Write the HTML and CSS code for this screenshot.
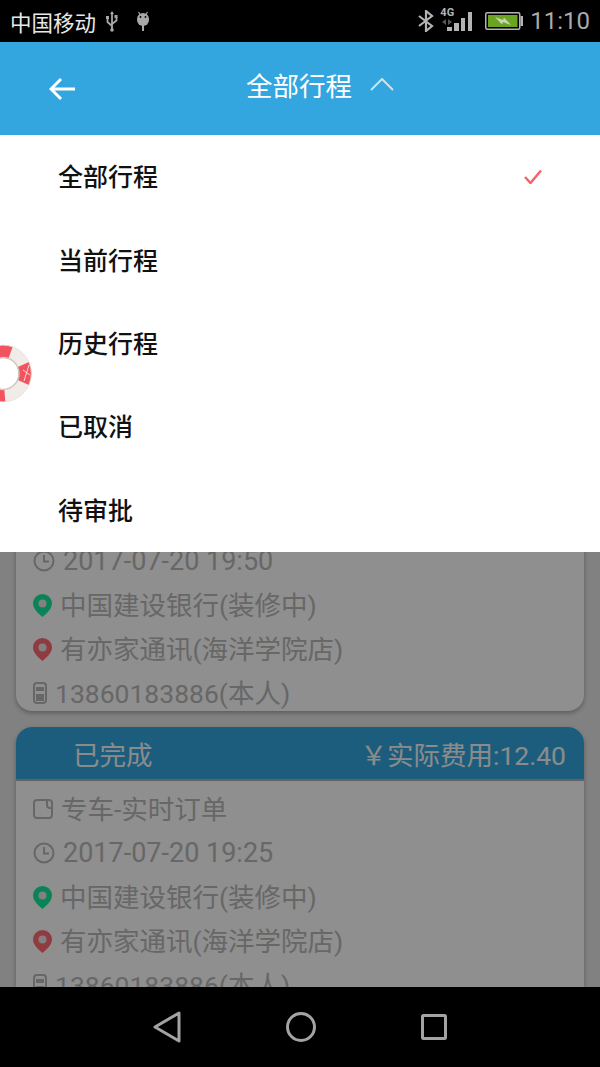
FILE: index.html
```html
<!DOCTYPE html>
<html lang="zh-CN">
<head>
  <meta charset="utf-8">
  <title>全部行程</title>
  <link rel="stylesheet" href="styles.css">
</head>
<body>
  <div class="phone">

    <div class="status-bar">
      <span class="carrier">中国移动</span>
      <svg class="ic-usb" viewBox="0 0 14 21"><path d="M7 1v19M7 15L2.500 11V7M7 13l4.500-3.500V6" fill="none" stroke="#a8a8a8" stroke-width="1.800"/><path d="M7 0l2 3H5zM1 5h3v3H1zM9.500 4h3v3h-3z" fill="#a8a8a8"/><circle cx="7" cy="19" r="1.800" fill="#a8a8a8"/></svg>
      <svg class="ic-debug" viewBox="0 0 14 20"><path d="M2.500 1l2 3M11.500 1l-2 3" stroke="#a8a8a8" stroke-width="1.200"/><path d="M1 8a6 6 0 0 1 12 0v1a6 6 0 0 1-12 0z" fill="#a8a8a8"/><path d="M7 14v6" stroke="#a8a8a8" stroke-width="2"/><circle cx="4.500" cy="6" r=".9" fill="#000"/><circle cx="9.500" cy="6" r=".9" fill="#000"/></svg>
      <span class="status-right">
        <svg class="ic-bt" viewBox="0 0 16 22"><path d="M1 6l13 10-6 5V1l6 5L1 16" fill="none" stroke="#b4b4b4" stroke-width="2.200"/></svg>
        <span class="net">
          <span class="net-label">4G</span>
          <svg class="ic-arrows" viewBox="0 0 10 6"><path d="M4 0v6L0 3zM6 0v6l4-3z" fill="#555"/></svg>
        </span>
        <svg class="ic-signal" viewBox="0 0 25 19"><path d="M0 15h5v4H0zM7 11h5v8H7zM14 6h4v13h-4zM21 0h4v19h-4z" fill="#b4b4b4"/></svg>
        <svg class="ic-battery" viewBox="0 0 38 18"><rect x=".75" y=".75" width="34" height="16.500" rx="1.500" fill="#000" stroke="#b4b4b4" stroke-width="1.500"/><rect x="3" y="3" width="29.500" height="12" fill="#6aa521"/><path d="M35.500 4h2.500v10h-2.500z" fill="#b4b4b4"/><path d="M10 5l8 3 1-2.500 7 7.500-8-3-1 2.500z" fill="#c8d8b0"/></svg>
        <span class="clock">11:10</span>
      </span>
    </div>

    <div class="top-bar">
      <svg class="ic-back" viewBox="0 0 27 24"><path d="M26 12H2M12 2L2 12l10 10" fill="none" stroke="#fff" stroke-width="3"/></svg>
      <span class="top-title">全部行程</span>
      <svg class="ic-chevron" viewBox="0 0 24 13"><path d="M1 12L12 1l11 11" fill="none" stroke="#cfe3ee" stroke-width="2"/></svg>
    </div>

    <div class="content">
      <div class="trip-list">
        <div class="trip-card">
          <div class="trip-body">
            <div class="trip-row">
              <svg class="ic-clock" viewBox="0 0 22 22"><circle cx="11" cy="11" r="9.500" fill="none" stroke="#b8b8b8" stroke-width="2"/><path d="M11 5v6.500h5" fill="none" stroke="#b8b8b8" stroke-width="2"/></svg>
              <span class="trip-time">2017-07-20 19:50</span>
            </div>
            <div class="trip-row">
              <svg class="ic-pin" viewBox="0 0 19 23"><path d="M9.500 0a9.500 9.500 0 0 1 9.500 9.500c0 5-5 10-9.500 13.500C5 19.500 0 14.500 0 9.500A9.500 9.500 0 0 1 9.500 0z" fill="#14e89c"/><circle cx="9.500" cy="9.500" r="4" fill="#e6e6e6"/></svg>
              <span class="trip-text">中国建设银行(装修中)</span>
            </div>
            <div class="trip-row">
              <svg class="ic-pin" viewBox="0 0 19 23"><path d="M9.500 0a9.500 9.500 0 0 1 9.500 9.500c0 5-5 10-9.500 13.500C5 19.500 0 14.500 0 9.500A9.500 9.500 0 0 1 9.500 0z" fill="#ff6a72"/><circle cx="9.500" cy="9.500" r="4" fill="#e6e6e6"/></svg>
              <span class="trip-text">有亦家通讯(海洋学院店)</span>
            </div>
            <div class="trip-row">
              <svg class="ic-phone" viewBox="0 0 14 22"><rect x="1" y="1" width="12" height="20" rx="3" fill="none" stroke="#b8b8b8" stroke-width="2"/><path d="M3 12h8v7H3z" fill="#b8b8b8"/><path d="M3 5h8v4H3z" fill="#b8b8b8"/></svg>
              <span class="trip-text">13860183886(本人)</span>
            </div>
          </div>
        </div>

        <div class="trip-card">
          <div class="trip-head">
            <span>已完成</span>
            <span>￥实际费用:12.40</span>
          </div>
          <div class="trip-body">
            <div class="trip-row">
              <svg class="ic-doc" viewBox="0 0 20 20"><path d="M4 1h12a3 3 0 0 1 3 3v12a3 3 0 0 1-3 3H4a3 3 0 0 1-3-3V4a3 3 0 0 1 3-3zM14 1v5a3 3 0 0 0 3 3h2" fill="none" stroke="#b8b8b8" stroke-width="2"/></svg>
              <span class="trip-text">专车-实时订单</span>
            </div>
            <div class="trip-row">
              <svg class="ic-clock" viewBox="0 0 22 22"><circle cx="11" cy="11" r="9.500" fill="none" stroke="#b8b8b8" stroke-width="2"/><path d="M11 5v6.500h5" fill="none" stroke="#b8b8b8" stroke-width="2"/></svg>
              <span class="trip-time">2017-07-20 19:25</span>
            </div>
            <div class="trip-row">
              <svg class="ic-pin" viewBox="0 0 19 23"><path d="M9.500 0a9.500 9.500 0 0 1 9.500 9.500c0 5-5 10-9.500 13.500C5 19.500 0 14.500 0 9.500A9.500 9.500 0 0 1 9.500 0z" fill="#14e89c"/><circle cx="9.500" cy="9.500" r="4" fill="#e6e6e6"/></svg>
              <span class="trip-text">中国建设银行(装修中)</span>
            </div>
            <div class="trip-row">
              <svg class="ic-pin" viewBox="0 0 19 23"><path d="M9.500 0a9.500 9.500 0 0 1 9.500 9.500c0 5-5 10-9.500 13.500C5 19.500 0 14.500 0 9.500A9.500 9.500 0 0 1 9.500 0z" fill="#ff6a72"/><circle cx="9.500" cy="9.500" r="4" fill="#e6e6e6"/></svg>
              <span class="trip-text">有亦家通讯(海洋学院店)</span>
            </div>
            <div class="trip-row">
              <svg class="ic-phone" viewBox="0 0 14 22"><rect x="1" y="1" width="12" height="20" rx="3" fill="none" stroke="#b8b8b8" stroke-width="2"/><path d="M3 12h8v7H3z" fill="#b8b8b8"/><path d="M3 5h8v4H3z" fill="#b8b8b8"/></svg>
              <span class="trip-text">13860183886(本人)</span>
            </div>
          </div>
        </div>
      </div>

      <div class="dim"></div>

      <div class="menu">
        <div class="menu-item">
          <span>全部行程</span>
          <svg class="ic-check" viewBox="0 0 18 15"><path d="M1 8l5.500 6L17 1.500" fill="none" stroke="#f8616a" stroke-width="2.500"/></svg>
        </div>
        <div class="menu-item"><span>当前行程</span></div>
        <div class="menu-item"><span>历史行程</span></div>
        <div class="menu-item"><span>已取消</span></div>
        <div class="menu-item"><span>待审批</span></div>
      </div>

      <!-- floating help button, half off the screen -->
      <svg class="float-buoy" viewBox="0 0 34 62">
        <circle cx="3" cy="30.500" r="22" fill="none" stroke="#f1ece7" stroke-width="13"/>
        <circle cx="3" cy="30.500" r="22" fill="none" stroke="#f2545f" stroke-width="13" pathLength="360" stroke-dasharray="48 61 40 115 50 46" stroke-dashoffset="24"/>
        <circle cx="3" cy="30.500" r="16" fill="none" stroke="#cfc8c0" stroke-width="1.500"/>
        <circle cx="3" cy="30.500" r="28.300" fill="none" stroke="#e6e0da" stroke-width=".8"/>
        <path d="M29 22l-5 16M23 27l7 5" stroke="#ffd6d8" stroke-width="1" fill="none"/>
      </svg>
    </div>

    <div class="nav-bar">
      <svg class="ic-nav-back" viewBox="0 0 28 32"><path d="M26 2v28L2 16z" fill="none" stroke="#a3a3a3" stroke-width="3" stroke-linejoin="round"/></svg>
      <svg class="ic-nav-home" viewBox="0 0 30 30"><circle cx="15" cy="15" r="13.500" fill="none" stroke="#a3a3a3" stroke-width="3"/></svg>
      <svg class="ic-nav-recent" viewBox="0 0 26 26"><rect x="1.500" y="1.500" width="23" height="23" rx="1" fill="none" stroke="#a3a3a3" stroke-width="3"/></svg>
    </div>

  </div>
</body>
</html>
```

FILE: styles.css
```css
* {
  box-sizing: border-box;
}

html,
body {
  margin: 0;
  padding: 0;
}

body {
  font-family: Roboto, "Noto Sans CJK SC", sans-serif;
  background: #000;
}

svg {
  display: block;
  flex: none;
}

.phone {
  width: 600px;
  height: 1067px;
  display: flex;
  flex-direction: column;
  overflow: hidden;
}

/* status bar */
.status-bar {
  height: 42px;
  flex: none;
  display: flex;
  align-items: center;
  padding: 0 10px;
  background: #000;
}

.carrier {
  font-size: 21.500px;
  color: #e8e8e8;
}

.ic-usb {
  width: 14px;
  height: 21px;
  margin-left: 9px;
}

.ic-debug {
  width: 14px;
  height: 20px;
  margin-left: 17px;
}

.status-right {
  margin-left: auto;
  display: flex;
  align-items: center;
}

.ic-bt {
  width: 16px;
  height: 22px;
}

.net {
  width: 16px;
  margin: -11px -8px 0 5px;
  display: flex;
  flex-direction: column;
  align-items: center;
}

.net-label {
  font-size: 11px;
  line-height: 11px;
  font-weight: 700;
  color: #b4b4b4;
}

.ic-arrows {
  width: 10px;
  height: 6px;
  margin-top: 1px;
}

.ic-signal {
  width: 25px;
  height: 19px;
}

.ic-battery {
  width: 38px;
  height: 18px;
  margin-left: 13px;
}

.clock {
  font-size: 24px;
  color: #aaa;
  margin-left: 7px;
}

/* top bar */
.top-bar {
  height: 93px;
  flex: none;
  display: flex;
  align-items: center;
  padding-left: 49px;
  background: #33a6df;
}

.ic-back {
  width: 27px;
  height: 24px;
}

.top-title {
  font-size: 26.500px;
  color: #fff;
  margin-left: 170px;
  margin-top: -9px;
}

.ic-chevron {
  width: 24px;
  height: 13px;
  margin-left: 18px;
  margin-top: -9px;
}

/* list under the menu */
.content {
  flex: 1;
  position: relative;
  overflow: hidden;
  background: #e6e6e6;
}

.trip-list {
  padding: 398px 16px 0;
  display: flex;
  flex-direction: column;
  gap: 16px;
}

.trip-card {
  flex: none;
  background: #fff;
  border-radius: 16px;
  box-shadow: 0 2px 4px rgba(0, 0, 0, 0.3);
}

.trip-head {
  height: 54px;
  display: flex;
  align-items: center;
  justify-content: space-between;
  padding: 0 18px 0 57px;
  font-size: 26.500px;
  color: #f8f8f8;
  background: #33a6df;
  border-radius: 16px 16px 0 0;
  border-bottom: 2px solid #b0b0b0;
}

.trip-body {
  padding: 10px 0 0 17px;
  display: flex;
  flex-direction: column;
  gap: 8px;
}

.trip-row {
  height: 36px;
  display: flex;
  align-items: center;
  gap: 8px;
  font-size: 26.500px;
  color: #b8b8b8;
  white-space: nowrap;
}

.trip-text {
  margin-bottom: 4px;
}

.trip-time {
  font-size: 27px;
}

.ic-clock {
  width: 22px;
  height: 22px;
}

.ic-pin {
  width: 19px;
  height: 23px;
}

.ic-phone {
  width: 14px;
  height: 22px;
}

.ic-doc {
  width: 20px;
  height: 20px;
}

.dim {
  position: absolute;
  inset: 0;
  background: rgba(0, 0, 0, 0.44);
}

/* dropdown */
.menu {
  position: absolute;
  top: 0;
  left: 0;
  right: 0;
  height: 417px;
  display: flex;
  flex-direction: column;
  background: #fff;
}

.menu-item {
  flex: 1;
  display: flex;
  align-items: center;
  justify-content: space-between;
  padding: 0 58px;
  font-size: 25px;
  font-weight: 500;
  color: #111;
}

.menu-item span {
  margin-bottom: 3px;
}

.ic-check {
  width: 18px;
  height: 15px;
}

.float-buoy {
  position: absolute;
  left: 0;
  top: 208px;
  width: 34px;
  height: 62px;
}

/* nav bar */
.nav-bar {
  height: 80px;
  flex: none;
  display: flex;
  align-items: center;
  justify-content: center;
  gap: 105px;
  background: #000;
}

.ic-nav-back {
  width: 28px;
  height: 32px;
}

.ic-nav-home {
  width: 30px;
  height: 30px;
}

.ic-nav-recent {
  width: 26px;
  height: 26px;
}
```
